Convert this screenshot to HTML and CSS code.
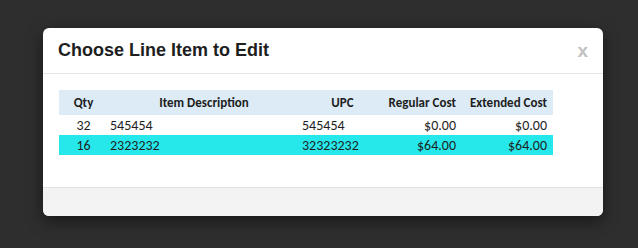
FILE: index.html
```html
<!DOCTYPE html>
<html lang="en">
<head>
  <meta charset="UTF-8" />
  <title>Choose Line Item</title>
  <link rel="stylesheet" href="styles.css">
</head>
<body>
  <div class="modal">
    <div class="modal-header">
      <h4 class="modal-title">Choose Line Item to Edit</h4>
      <span class="close">x</span>
    </div>
    <div class="modal-body">
      <table class="items">
        <colgroup>
          <col class="c-qty">
          <col class="c-desc">
          <col class="c-upc">
          <col class="c-reg">
          <col class="c-ext">
        </colgroup>
        <thead>
          <tr>
            <th class="center">Qty</th>
            <th class="center">Item Description</th>
            <th class="center">UPC</th>
            <th class="right">Regular Cost</th>
            <th class="right">Extended Cost</th>
          </tr>
        </thead>
        <tbody>
          <tr>
            <td class="center">32</td>
            <td>545454</td>
            <td>545454</td>
            <td class="right">$0.00</td>
            <td class="right">$0.00</td>
          </tr>
          <tr class="selected">
            <td class="center">16</td>
            <td>2323232</td>
            <td>32323232</td>
            <td class="right">$64.00</td>
            <td class="right">$64.00</td>
          </tr>
        </tbody>
      </table>
    </div>
    <div class="modal-footer"></div>
  </div>
</body>
</html>
```

FILE: styles.css
```css
body {
  margin: 0;
  padding: 28px 0 0 43px;
  background-color: #2e2e2e;
  font-family: 'Liberation Sans', Arial, sans-serif;
  height: 248px;
  box-sizing: border-box;
  overflow: hidden;
}
.modal {
  width: 560px;
  background-color: #fff;
  border-radius: 6px;
  box-shadow: 0 5px 15px rgba(0,0,0,0.5);
  overflow: hidden;
}
.modal-header {
  display: flex;
  justify-content: space-between;
  align-items: flex-start;
  padding: 12px 15px 13px;
  border-bottom: 1px solid #e5e5e5;
}
.modal-title {
  margin: 0;
  font-size: 18px;
  line-height: 20px;
  font-weight: bold;
  color: #1e1e1e;
}
.close {
  font-size: 19px;
  line-height: 18px;
  font-weight: bold;
  color: #c2c2c2;
  margin-top: 2px;
}
.modal-body {
  padding: 16px 16px 32px;
}
.items {
  width: 494px;
  table-layout: fixed;
  border-collapse: collapse;
  font-family: Carlito, Lato, sans-serif;
  color: #1e1e1e;
}
.c-qty { width: 49px; }
.c-desc { width: 192px; }
.c-upc { width: 85px; }
.c-reg { width: 77px; }
.c-ext { width: 91px; }
.items th {
  background-color: #dcebf6;
  height: 25px;
  padding: 0 6px 0 2px;
  font-size: 13px;
  font-weight: bold;
}
.items td {
  height: 20px;
  padding: 0 6px 0 2px;
  font-size: 14px;
}
.items tr.selected td {
  background-color: #26e8eb;
}
.items .center {
  text-align: center;
  padding: 0 4px;
}
.right { text-align: right; }
.modal-footer {
  height: 28px;
  border-top: 1px solid #e0e0e0;
  background-color: #f3f3f3;
}
```
